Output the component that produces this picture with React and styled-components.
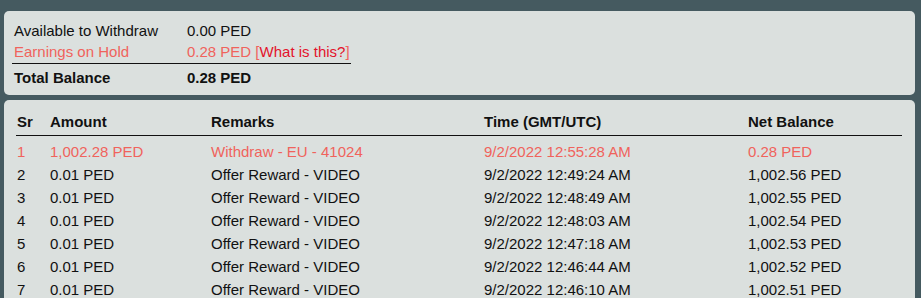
import React from "react";
import styled, { createGlobalStyle } from "styled-components";

const GlobalStyle = createGlobalStyle`
  body {
    margin: 0;
    background-color: #455a60;
    font-family: "Liberation Sans", Arial, sans-serif;
    color: #111;
  }
`;

const rows = [
  { sr: 1, amount: "1,002.28 PED", remarks: "Withdraw - EU - 41024", time: "9/2/2022 12:55:28 AM", net: "0.28 PED", hold: true },
  { sr: 2, amount: "0.01 PED", remarks: "Offer Reward - VIDEO", time: "9/2/2022 12:49:24 AM", net: "1,002.56 PED" },
  { sr: 3, amount: "0.01 PED", remarks: "Offer Reward - VIDEO", time: "9/2/2022 12:48:49 AM", net: "1,002.55 PED" },
  { sr: 4, amount: "0.01 PED", remarks: "Offer Reward - VIDEO", time: "9/2/2022 12:48:03 AM", net: "1,002.54 PED" },
  { sr: 5, amount: "0.01 PED", remarks: "Offer Reward - VIDEO", time: "9/2/2022 12:47:18 AM", net: "1,002.53 PED" },
  { sr: 6, amount: "0.01 PED", remarks: "Offer Reward - VIDEO", time: "9/2/2022 12:46:44 AM", net: "1,002.52 PED" },
  { sr: 7, amount: "0.01 PED", remarks: "Offer Reward - VIDEO", time: "9/2/2022 12:46:10 AM", net: "1,002.51 PED" },
];

const App = () => {
  return (
    <Page>
      <GlobalStyle />
      <Panel>
        <Summary>
          <SumRow>
            <span>Available to Withdraw</span>
            <span>0.00 PED</span>
          </SumRow>
          <SumRow hold>
            <span>Earnings on Hold</span>
            <span>
              0.28 PED [<Help>What is this?</Help>]
            </span>
          </SumRow>
          <SumRow total>
            <span>Total Balance</span>
            <span>0.28 PED</span>
          </SumRow>
        </Summary>
      </Panel>
      <TablePanel>
        <Table>
          <HeadRow>
            <span>Sr</span>
            <span>Amount</span>
            <span>Remarks</span>
            <span>Time (GMT/UTC)</span>
            <span>Net Balance</span>
          </HeadRow>
          {rows.map((r) => (
            <Row key={r.sr} hold={r.hold}>
              <span>{r.sr}</span>
              <span>{r.amount}</span>
              <span>{r.remarks}</span>
              <span>{r.time}</span>
              <span>{r.net}</span>
            </Row>
          ))}
        </Table>
      </TablePanel>
    </Page>
  );
};

const Page = styled.div`
  display: flex;
  flex-direction: column;
  gap: 5px;
  padding: 11px 6px 0 4px;
  height: 298px;
  box-sizing: border-box;
  overflow: hidden;
`;

const Panel = styled.div`
  background-color: #dbe0de;
  border-radius: 5px;
  padding: 9px 8px 7px 8px;
`;

const Summary = styled.div`
  display: flex;
  flex-direction: column;
  width: 339px;
`;

const SumRow = styled.div`
  display: grid;
  grid-template-columns: 173px 1fr;
  font-size: 15px;
  line-height: 21px;
  padding-left: 2px;
  color: ${(p) => (p.hold ? "#f0635c" : "#111")};
  font-weight: ${(p) => (p.total ? "bold" : "normal")};
  border-top: ${(p) => (p.total ? "1px solid #111" : "none")};
  margin-top: ${(p) => (p.total ? "1px" : "0")};
  padding-top: ${(p) => (p.total ? "3px" : "0")};
`;

const Help = styled.span`
  color: #e3132c;
`;

const TablePanel = styled.div`
  flex: 1;
  background-color: #dbe0de;
  border-radius: 5px 5px 0 0;
  padding: 10px 13px 0 12px;
`;

const Table = styled.div`
  display: flex;
  flex-direction: column;
`;

const HeadRow = styled.div`
  display: grid;
  grid-template-columns: 33px 161px 273px 264px 1fr;
  font-size: 15px;
  font-weight: bold;
  line-height: 23px;
  padding: 0 0 2px 1px;
  border-bottom: 1px solid #111;
  margin-bottom: 4px;
`;

const Row = styled.div`
  display: grid;
  grid-template-columns: 33px 161px 273px 264px 1fr;
  font-size: 15px;
  line-height: 23px;
  padding-left: 1px;
  color: ${(p) => (p.hold ? "#f0635c" : "#111")};
`;

export default App;
